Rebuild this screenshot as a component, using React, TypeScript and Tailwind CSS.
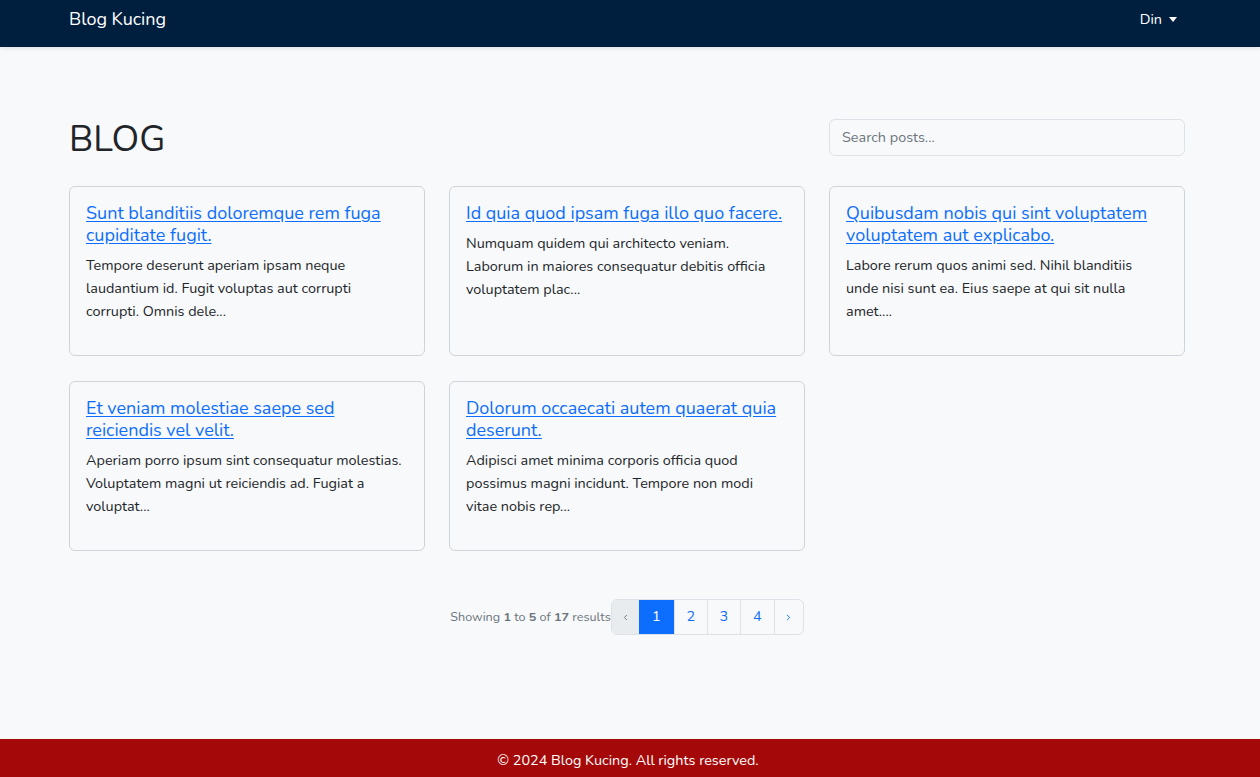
import { ChevronLeft } from 'lucide-react'

const font = { fontFamily: 'Nunito, Lato, "Noto Sans", sans-serif' }

type Post = { title: string; excerpt: string }

const posts: Post[] = [
  {
    title: 'Sunt blanditiis doloremque rem fuga cupiditate fugit.',
    excerpt:
      'Tempore deserunt aperiam ipsam neque laudantium id. Fugit voluptas aut corrupti corrupti. Omnis dele...',
  },
  {
    title: 'Id quia quod ipsam fuga illo quo facere.',
    excerpt:
      'Numquam quidem qui architecto veniam. Laborum in maiores consequatur debitis officia voluptatem plac...',
  },
  {
    title: 'Quibusdam nobis qui sint voluptatem voluptatem aut explicabo.',
    excerpt:
      'Labore rerum quos animi sed. Nihil blanditiis unde nisi sunt ea. Eius saepe at qui sit nulla amet....',
  },
  {
    title: 'Et veniam molestiae saepe sed reiciendis vel velit.',
    excerpt:
      'Aperiam porro ipsum sint consequatur molestias. Voluptatem magni ut reiciendis ad. Fugiat a voluptat...',
  },
  {
    title: 'Dolorum occaecati autem quaerat quia deserunt.',
    excerpt:
      'Adipisci amet minima corporis officia quod possimus magni incidunt. Tempore non modi vitae nobis rep...',
  },
]

function PostCard({ post }: { post: Post }) {
  return (
    <div className="rounded-[6px] border border-[#ced4da] px-4 pb-4 pt-[15px]">
      <a
        href="#"
        className="mb-2 block text-[18px] leading-[22px] text-[#0d6efd] underline underline-offset-[2px]"
      >
        {post.title}
      </a>
      <p className="mb-[16px] pr-[4px] text-[14.4px] leading-[23px] text-[#212529]">{post.excerpt}</p>
    </div>
  )
}

function Pagination() {
  const pages = [1, 2, 3, 4]
  return (
    <div className="mt-[48px] flex items-center justify-center">
      <p className="text-[12.6px] leading-none text-[#6c757d]">
        Showing <span className="font-bold">1</span> to <span className="font-bold">5</span> of{' '}
        <span className="font-bold">17</span> results
      </p>
      <div className="flex h-[36px] overflow-hidden rounded-[6px] border border-[#dee2e6] text-[14.4px]">
        <span className="flex w-[27px] items-center justify-center bg-[#e9ecef] text-[#6c757d]">
          <ChevronLeft className="h-[9px] w-[9px]" strokeWidth={2.5} />
        </span>
        {pages.map((p) =>
          p === 1 ? (
            <span key={p} className="flex w-[35px] items-center justify-center bg-[#0d6efd] text-white">
              {p}
            </span>
          ) : (
            <a
              key={p}
              href="#"
              className={`flex items-center justify-center border-l border-[#dee2e6] text-[#0d6efd] ${
                p === 4 ? 'w-[34px]' : 'w-[33px]'
              }`}
            >
              {p}
            </a>
          )
        )}
        <a
          href="#"
          className="flex w-[29px] items-center justify-center border-l border-[#dee2e6] text-[#0d6efd]"
        >
          <ChevronLeft className="h-[9px] w-[9px] rotate-180" strokeWidth={2.5} />
        </a>
      </div>
    </div>
  )
}

export default function App() {
  return (
    <div className="flex min-h-screen flex-col bg-[#f8f9fa]" style={font}>
      <nav className="relative z-10 h-[47px] bg-[#001f3f] shadow-[0_2px_4px_rgba(0,0,0,0.08)]">
        <div className="ml-[69px] flex h-full w-[1108px] items-center justify-between pb-[8px]">
          <a href="#" className="text-[18px] text-white">
            Blog Kucing
          </a>
          <button className="flex items-center gap-[7px] text-[14.4px] text-white">
            Din
            <span className="mt-[1px] h-0 w-0 border-x-[4px] border-t-[5px] border-x-transparent border-t-white" />
          </button>
        </div>
      </nav>

      <main className="ml-[69px] w-[1116px] pb-[80px] pt-[67px]">
        <div className="mb-[25px] flex h-[47px] items-center justify-between">
          <h1 className="mt-[3px] text-[36px] leading-[43px] text-[#212529]">BLOG</h1>
          <input
            type="text"
            placeholder="Search posts..."
            className="h-[37px] w-[356px] rounded-[6px] border border-[#dee2e6] bg-[#f8f9fa] px-3 pb-[1px] text-[14.4px] text-[#212529] placeholder:text-[#6c757d] focus:outline-none"
          />
        </div>

        <div className="grid grid-cols-3 gap-x-[24px] gap-y-[25px]">
          {posts.map((post) => (
            <PostCard key={post.title} post={post} />
          ))}
        </div>

        <Pagination />
      </main>

      <footer className="mt-auto flex h-[38px] items-center justify-center bg-[#a40808] pt-[5px]">
        <p className="pr-[4px] text-[14.4px] text-white">© 2024 Blog Kucing. All rights reserved.</p>
      </footer>
    </div>
  )
}
